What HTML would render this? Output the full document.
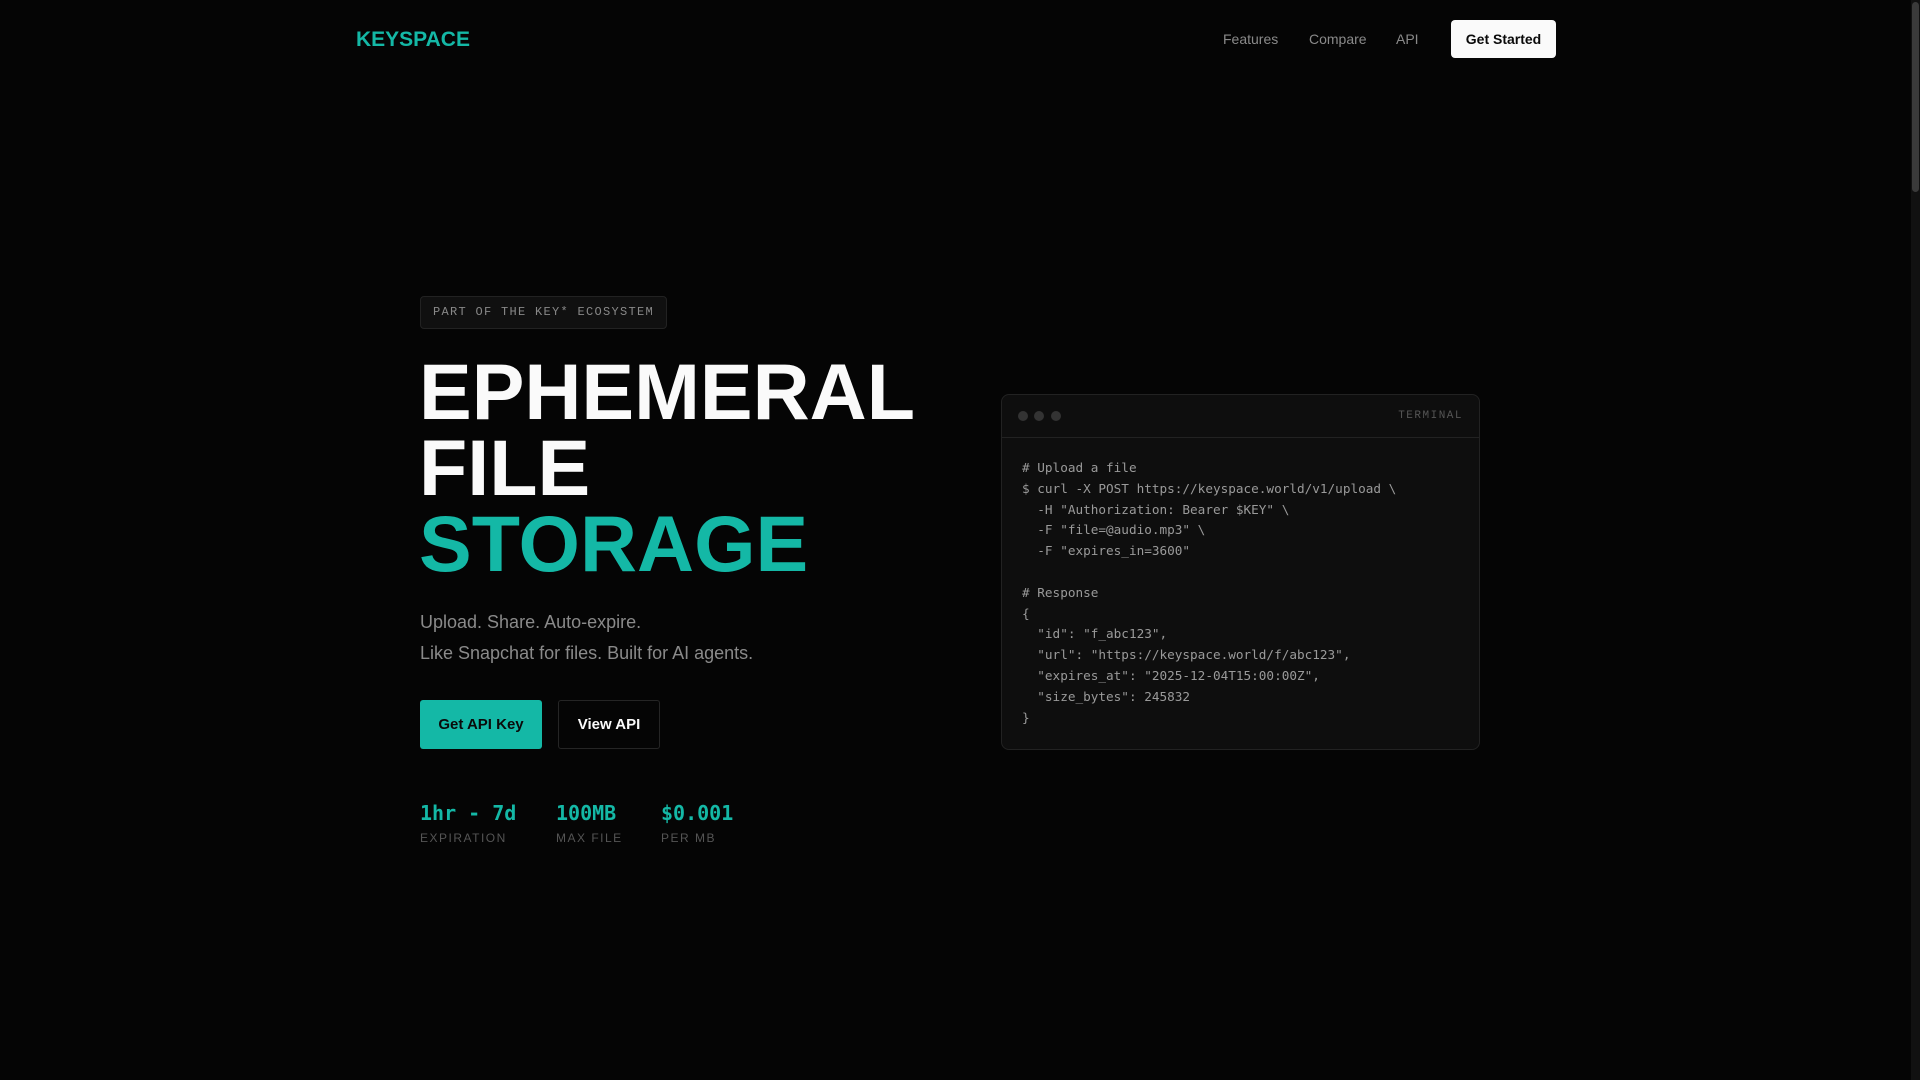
<!DOCTYPE html>
<html><head><meta charset="utf-8"><style>
*{margin:0;padding:0;box-sizing:border-box}
html,body{width:1920px;height:1080px;background:#050505;overflow:hidden;font-family:"Liberation Sans",Arial,sans-serif}
.abs{position:absolute}
.logo{left:356px;top:28px;font-size:21px;font-weight:bold;color:#14b8a6}
.nav{top:31px;font-size:14px;color:#8a8a8a}
.gs{left:1451px;top:20px;width:105px;height:38px;background:#fafafa;border-radius:4px;color:#0a0a0a;font-weight:bold;font-size:14px;text-align:center;line-height:38px}
.badge{left:420px;top:296px;width:247px;height:33px;background:#101010;border:1px solid #222;border-radius:4px;font-family:"Liberation Mono",monospace;font-size:12px;letter-spacing:1.3px;color:#888;line-height:31px;text-align:center;white-space:nowrap}
h1{position:absolute;left:419px;top:354px;font-size:79px;line-height:76px;font-weight:bold;letter-spacing:0;color:#fafafa}
h1 span{color:#14b8a6}
.sub{left:420px;top:607px;font-size:18px;line-height:31px;color:#8a8a8a}
.b1{left:420px;top:700px;width:122px;height:49px;background:#14b8a6;border-radius:3px;color:#0a0a0a;font-weight:bold;font-size:15px;text-align:center;line-height:49px}
.b2{left:558px;top:700px;width:102px;height:49px;border:1px solid #252525;border-radius:3px;color:#fafafa;font-weight:bold;font-size:15px;text-align:center;line-height:47px}
.sv{top:801px;font-family:"DejaVu Sans Mono","Liberation Mono",monospace;font-weight:bold;font-size:20px;color:#14b8a6}
.sl{top:831px;font-size:12px;letter-spacing:1.5px;color:#555}
.term{left:1001px;top:394px;width:479px;height:356px;background:#0e0e0e;border:1px solid #222;border-radius:8px}
.th{height:43px;border-bottom:1px solid #222;position:relative}
.dot{position:absolute;top:16px;width:10px;height:10px;border-radius:50%;background:#333}
.tt{position:absolute;right:16px;top:15px;font-family:"Liberation Mono",monospace;font-size:11px;letter-spacing:1.5px;color:#555}
pre{position:absolute;left:20px;top:63px;font-family:"DejaVu Sans Mono","Liberation Mono",monospace;font-size:12.7px;line-height:20.8px;color:#9a9a9a}
.sb{left:1911px;top:0;width:9px;height:1080px;background:#111}
.sbt{left:1912px;top:2px;width:7px;height:190px;background:#3a3a3a;border-radius:4px}
</style></head><body>
<div class="abs logo">KEYSPACE</div>
<div class="abs nav" style="left:1223px">Features</div>
<div class="abs nav" style="left:1309px">Compare</div>
<div class="abs nav" style="left:1396px">API</div>
<div class="abs gs">Get Started</div>
<div class="abs badge">PART OF THE KEY* ECOSYSTEM</div>
<h1>EPHEMERAL<br>FILE<br><span>STORAGE</span></h1>
<div class="abs sub">Upload. Share. Auto-expire.<br>Like Snapchat for files. Built for AI agents.</div>
<div class="abs b1">Get API Key</div>
<div class="abs b2">View API</div>
<div class="abs sv" style="left:420px">1hr - 7d</div>
<div class="abs sv" style="left:556px">100MB</div>
<div class="abs sv" style="left:661px">$0.001</div>
<div class="abs sl" style="left:420px">EXPIRATION</div>
<div class="abs sl" style="left:556px">MAX FILE</div>
<div class="abs sl" style="left:661px">PER MB</div>
<div class="abs term">
<div class="th"><div class="dot" style="left:16px"></div><div class="dot" style="left:32px"></div><div class="dot" style="left:49px"></div><div class="tt">TERMINAL</div></div>
<pre># Upload a file
$ curl -X POST https://keyspace.world/v1/upload \
  -H "Authorization: Bearer $KEY" \
  -F "file=@audio.mp3" \
  -F "expires_in=3600"

# Response
{
  "id": "f_abc123",
  "url": "https://keyspace.world/f/abc123",
  "expires_at": "2025-12-04T15:00:00Z",
  "size_bytes": 245832
}</pre>
</div>
<div class="abs sb"></div><div class="abs sbt"></div>
</body></html>
